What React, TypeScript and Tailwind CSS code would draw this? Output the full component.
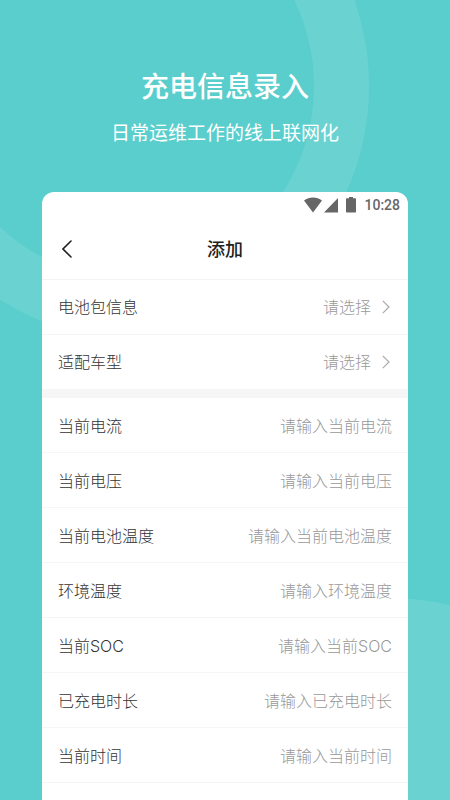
const pickers = [
    { id: "pack", label: "电池包信息" },
    { id: "model", label: "适配车型" },
];

const fields = [
    { id: "current", label: "当前电流" },
    { id: "voltage", label: "当前电压" },
    { id: "pack-temp", label: "当前电池温度" },
    { id: "env-temp", label: "环境温度" },
    { id: "soc", label: "当前SOC" },
    { id: "duration", label: "已充电时长" },
    { id: "time", label: "当前时间" },
];

function Backdrop() {
    return (
        <svg
            className="absolute inset-0 h-full w-full"
            viewBox="0 0 450 800"
            preserveAspectRatio="xMidYMin slice"
            fill="#6ad3d2"
            aria-hidden="true"
        >
            <path
                fillRule="evenodd"
                d="M-115 86a242 251 0 1 0 484 0a242 251 0 1 0 -484 0ZM-60 86a187 192 0 1 0 374 0a187 192 0 1 0 -374 0Z"
            />
            <circle cx="388" cy="863" r="265" />
        </svg>
    );
}

function StatusBar() {
    return (
        <div className="flex h-[26px] items-center justify-end pr-2 text-[#666666]">
            <svg width="18" height="16" viewBox="0 0 18 16" fill="currentColor" aria-hidden="true">
                <path d="M0 3.4C5 -0.6 13 -0.6 18 3.4L9 15.4Z" />
            </svg>
            <svg className="ml-0.5" width="14" height="16" viewBox="0 0 14 16" fill="currentColor" aria-hidden="true">
                <path d="M14 1V15.4H0Z" />
            </svg>
            <svg className="ml-2" width="10" height="16" viewBox="0 0 10 16" fill="currentColor" aria-hidden="true">
                <path d="M3 0H7V1.2H9.2Q10 1.2 10 2V14.8Q10 15.6 9.2 15.6H0.8Q0 15.6 0 14.8V2Q0 1.2 0.8 1.2H3Z" />
            </svg>
            <span className="ml-2 font-['Roboto',sans-serif] text-sm font-medium">10:28</span>
        </div>
    );
}

export default function App() {
    return (
        <div className="relative flex min-h-screen flex-col overflow-hidden bg-[#5acecc] font-['Inter','Noto_Sans_CJK_SC',sans-serif]">
            <Backdrop />

            <header className="relative pt-16 text-center text-white">
                <h1 className="text-[28px] font-medium leading-[46px]">充电信息录入</h1>
                <p className="mt-2 text-[19px] font-normal leading-8">日常运维工作的线上联网化</p>
            </header>

            <main className="relative mx-[42px] mt-[42px] flex-1 rounded-t-xl bg-white">
                <StatusBar />

                <div className="flex h-[62px] items-center border-b border-[#f3f3f3] px-4">
                    <button type="button" aria-label="返回" className="w-6 text-[#222222]">
                        <svg
                            className="ml-1"
                            width="10"
                            height="18"
                            viewBox="0 0 10 18"
                            fill="none"
                            stroke="currentColor"
                            strokeWidth="1.6"
                            strokeLinecap="round"
                            aria-hidden="true"
                        >
                            <path d="M9 1L1 9L9 17" />
                        </svg>
                    </button>
                    <h2 className="flex-1 pt-0.5 text-center text-lg font-medium text-[#222222]">添加</h2>
                    <span className="w-6" />
                </div>

                <form className="text-base font-light">
                    <div className="border-b-8 border-[#f6f6f6]">
                        {pickers.map((p) => (
                            <div key={p.id} className="flex h-[55px] items-center border-b border-[#f6f6f6] px-4">
                                <label htmlFor={p.id} className="flex-1 text-[#333333]">
                                    {p.label}
                                </label>
                                <select id={p.id} className="appearance-none bg-transparent text-[#999999] outline-none">
                                    <option>请选择</option>
                                </select>
                                <svg
                                    className="ml-2.5 mr-0.5"
                                    width="8"
                                    height="14"
                                    viewBox="0 0 8 14"
                                    fill="none"
                                    stroke="#aaaaaa"
                                    strokeWidth="1.2"
                                    aria-hidden="true"
                                >
                                    <path d="M0.8 0.8L7 7L0.8 13.2" />
                                </svg>
                            </div>
                        ))}
                    </div>

                    {fields.map((f) => (
                        <div key={f.id} className="flex h-[55px] items-center border-b border-[#f6f6f6] px-4 pt-0.5">
                            <label htmlFor={f.id} className="shrink-0 text-[#333333]">
                                {f.label}
                            </label>
                            <input
                                id={f.id}
                                type="text"
                                placeholder={`请输入${f.label}`}
                                className="min-w-0 flex-1 bg-transparent text-right text-[#333333] outline-none placeholder:text-[#999999]"
                            />
                        </div>
                    ))}
                </form>
            </main>
        </div>
    );
}
